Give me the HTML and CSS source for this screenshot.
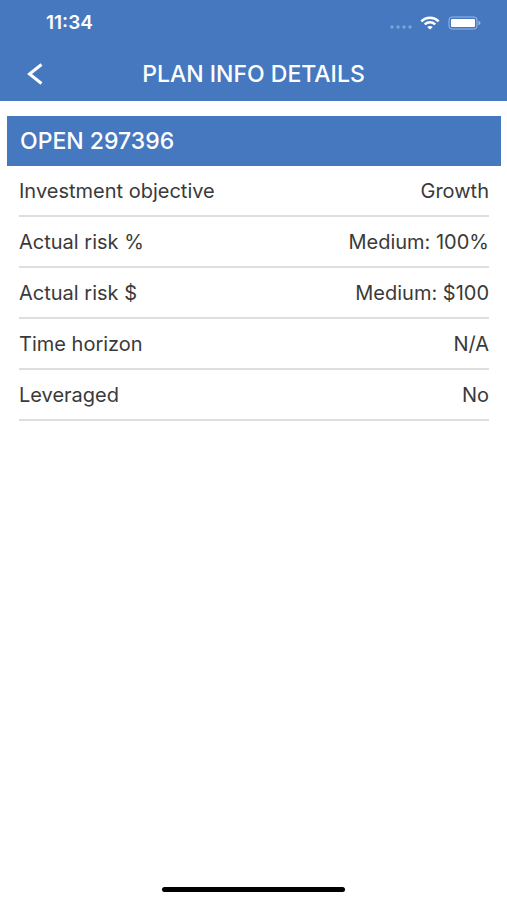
FILE: index.html
```html
<!DOCTYPE html>
<html lang="en">
<head>
<meta charset="utf-8">
<meta name="viewport" content="width=device-width, initial-scale=1">
<title>Plan Info Details</title>
<link rel="stylesheet" href="styles.css">
</head>
<body>
<header class="top">
  <div class="status">
    <span class="time">11:34</span>
    <div class="indicators">
      <svg class="signal" width="24" height="14" viewBox="0 0 24 14" aria-hidden="true">
        <circle cx="4" cy="11" r="1.700"/><circle cx="10" cy="11" r="1.700"/><circle cx="16" cy="11" r="1.700"/><circle cx="22" cy="11" r="1.700"/>
      </svg>
      <svg class="wifi" width="20" height="14" viewBox="0 0 20 14" aria-hidden="true">
        <path d="M1.300 5.300C6.300.7 13.700.7 18.700 5.300" />
        <path d="M4.700 8.400C7.900 5.600 12.100 5.600 15.300 8.400" />
        <path class="dot" d="M7.200 11C8.900 9.600 11.100 9.600 12.800 11L10 13.400Z" />
      </svg>
      <svg class="battery" width="33" height="14" viewBox="0 0 33 14" aria-hidden="true">
        <rect class="shell" x="1" y="1" width="28" height="12" rx="3"/>
        <rect class="charge" x="3" y="3" width="24" height="8" rx="1"/>
        <path class="tip" d="M30.500 4.800Q32.500 5.500 32.500 7T30.500 9.200Z"/>
      </svg>
    </div>
  </div>
  <div class="nav">
    <button class="back" type="button" aria-label="Back">
      <svg width="16" height="22" viewBox="0 0 16 22" aria-hidden="true"><path d="M14.500 1.500L2.500 11L14.500 20.500"/></svg>
    </button>
    <h1 class="title">PLAN INFO DETAILS</h1>
  </div>
</header>
<main class="plan">
  <h2 class="plan-name" id="plan-name">OPEN 297396</h2>
  <div class="plan-body">
    <table class="details" aria-labelledby="plan-name">
      <tbody>
        <tr><th scope="row">Investment objective</th><td>Growth</td></tr>
        <tr><th scope="row">Actual risk %</th><td>Medium: 100%</td></tr>
        <tr><th scope="row">Actual risk $</th><td>Medium: $100</td></tr>
        <tr><th scope="row">Time horizon</th><td>N/A</td></tr>
        <tr><th scope="row">Leveraged</th><td>No</td></tr>
      </tbody>
    </table>
  </div>
</main>
<footer class="home"><div class="home-bar"></div></footer>
</body>
</html>
```
FILE: styles.css
```css
* {
  box-sizing: border-box;
}

body {
  margin: 0;
  min-height: 100vh;
  display: flex;
  flex-direction: column;
  background: #fff;
  color: #3a3a3a;
  font-family: Inter, "Liberation Sans", sans-serif;
  font-size: 20px;
  line-height: 24px;
}

.top {
  background: #4678bf;
  color: #fff;
}

.status {
  display: flex;
  align-items: center;
  justify-content: space-between;
  height: 46px;
  padding: 0 26px 0 46px;
}

.time {
  font-size: 19px;
  font-weight: 600;
}

.indicators {
  display: flex;
  align-items: center;
  gap: 8px;
}

.signal {
  fill: #7da3da;
}

.wifi {
  fill: none;
  stroke: #fff;
  stroke-width: 2.5;
}

.wifi .dot {
  fill: #fff;
  stroke: none;
}

.shell {
  fill: none;
  stroke: #9ab8e4;
  stroke-width: 1;
}

.charge {
  fill: #fff;
}

.tip {
  fill: #9ab8e4;
}

.nav {
  display: grid;
  grid-template-columns: 70px 1fr 70px;
  align-items: center;
  height: 55px;
}

.back {
  display: flex;
  align-items: center;
  justify-content: center;
  height: 44px;
  padding: 0;
  border: 0;
  background: none;
  color: inherit;
}

.back path {
  fill: none;
  stroke: currentColor;
  stroke-width: 3;
}

.title {
  margin: 0;
  font-size: 23px;
  font-weight: 500;
  text-align: center;
}

.plan {
  flex: 1;
  padding: 15px 6px 0 7px;
}

.plan-name {
  margin: 0;
  padding: 13px;
  background: #4678bf;
  color: #fff;
  font-size: 23px;
  font-weight: 500;
}

.plan-body {
  padding: 0 12px;
}

.details {
  width: 100%;
  border-spacing: 0;
}

.details th,
.details td {
  height: 51px;
  padding: 0;
  border-bottom: 2px solid #dedede;
  font-weight: 400;
  text-align: left;
}

.details td {
  text-align: right;
}

.home {
  display: flex;
  justify-content: center;
  padding-bottom: 8px;
}

.home-bar {
  width: 36%;
  height: 5px;
  border-radius: 3px;
  background: #000;
}
```
